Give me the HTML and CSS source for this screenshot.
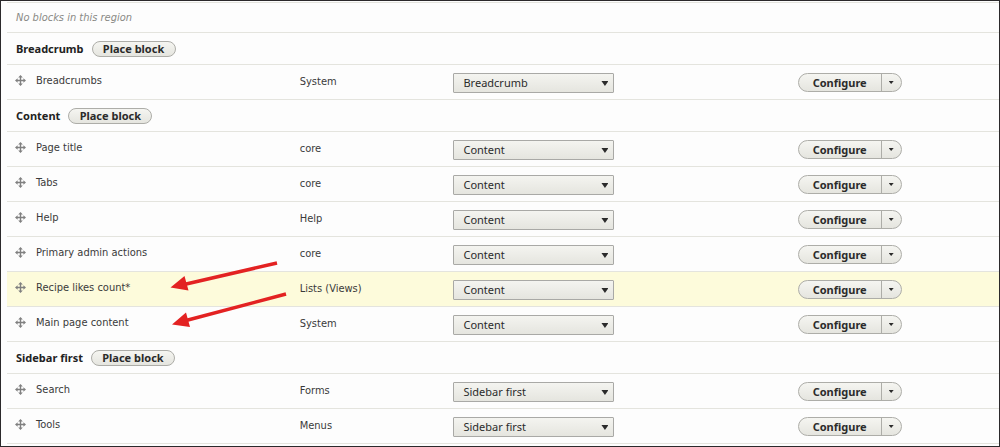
FILE: index.html
```html
<!DOCTYPE html>
<html lang="en">
<head>
<meta charset="utf-8">
<title>Block layout</title>
<link rel="stylesheet" href="styles.css">
</head>
<body>
<svg class="defs" aria-hidden="true">
  <symbol id="move" viewBox="0 0 11 11">
    <path d="M5.500 0 7.800 2.600H6.200V4.800H8.400V3.200L11 5.500 8.400 7.800V6.200H6.200V8.400H7.800L5.500 11 3.200 8.400H4.800V6.200H2.600V7.800L0 5.500 2.600 3.200V4.800H4.800V2.600H3.200Z"/>
  </symbol>
</svg>
<main class="page">
<table class="blocks">
  <colgroup><col class="col-name"><col class="col-type"><col class="col-region"><col></colgroup>
  <tbody id="rows">
  </tbody>
</table>
<svg class="arrows" width="1000" height="447" viewBox="0 0 1000 447" aria-hidden="true">
  <path class="shaft" d="M277 263 184 284.500M286 294 186 320.500"/>
  <path class="head" d="M170.500 287.500 184.500 276 188.500 290.500ZM172 324.500 186 312.500 190 327Z"/>
</svg>
</main>
<script src="blocks.js"></script>
</body>
</html>
```
FILE: blocks.js
```js
const regions = [
  { name: "Breadcrumb", blocks: [["Breadcrumbs", "System"]] },
  { name: "Content", blocks: [
    ["Page title", "core"],
    ["Tabs", "core"],
    ["Help", "Help"],
    ["Primary admin actions", "core"],
    ["Recipe likes count*", "Lists (Views)", true],
    ["Main page content", "System"]
  ] },
  { name: "Sidebar first", blocks: [["Search", "Forms"], ["Tools", "Menus"]] }
];

const blockRow = ([title, type, changed], region) => `
  <tr class="block${changed ? " changed" : ""}">
    <td class="name"><div class="handle"><a href="#" aria-label="Move ${title}"><svg class="move"><use href="#move"/></svg></a><span>${title}</span></div></td>
    <td class="type">${type}</td>
    <td><div class="select"><select aria-label="Region for ${title}">
      ${regions.map(r => `<option${r.name === region ? " selected" : ""}>${r.name}</option>`).join("")}
    </select></div></td>
    <td><div class="dropbutton"><button class="configure" type="button">Configure</button><button class="toggle" type="button" aria-label="More actions"></button></div></td>
  </tr>`;

document.getElementById("rows").innerHTML =
  `<tr class="empty"><td colspan="4">No blocks in this region</td></tr>` +
  regions.map(r => `
  <tr class="region"><th colspan="4" scope="colgroup"><div class="title"><span>${r.name}</span><button class="place" type="button">Place block</button></div></th></tr>
  ${r.blocks.map(b => blockRow(b, r.name)).join("")}`).join("");
```
FILE: styles.css
```css
* { box-sizing: border-box; }
body {
  margin: 0;
  background: #fdfdfd;
  color: #3a3a3a;
  font: 11px/16px "DejaVu Sans Condensed", "DejaVu Sans", sans-serif;
}
button, select {
  margin: 0;
  color: #2b2b2b;
  font: 11px/18px "Noto Sans", sans-serif;
  cursor: pointer;
}
.defs { position: absolute; width: 0; height: 0; }
.page {
  position: relative;
  border: 1px solid #2b292b;
  padding: 1px 0 2px 6px;
  overflow: hidden;
}
.blocks {
  width: 100%;
  table-layout: fixed;
  border-spacing: 0;
  border-top: 1px solid #e4e4de;
}
.col-name { width: 28.6%; }
.col-type { width: 15.5%; }
.col-region { width: 34.7%; }
td, th {
  padding: 0 0 0 9px;
  border-bottom: 1px solid #e4e4de;
  text-align: left;
  vertical-align: top;
}
.empty td { height: 30px; padding-top: 7px; font-style: italic; color: #8a8a86; }
.region th { height: 32px; padding-top: 8px; color: #222; font-family: "Noto Sans", sans-serif; }
.title { display: flex; gap: 8px; }
.block td { height: 35px; padding-top: 8px; }
.block .name { padding-left: 8px; }
.block .type { padding-top: 9px; }
.changed td { background: #fdfbdb; }
.handle { display: flex; gap: 10px; }
.handle a { display: flex; height: 16px; padding-top: 2px; }
.move { width: 11px; height: 11px; fill: #808080; }
.select { position: relative; width: 161px; }
.select::after {
  content: "";
  position: absolute;
  right: 6px;
  top: 8px;
  width: 7px;
  height: 5px;
  background: #2b2b2b;
  clip-path: polygon(0 0, 100% 0, 50% 100%);
  pointer-events: none;
}
.select select {
  display: block;
  appearance: none;
  width: 100%;
  height: 20px;
  padding: 0 20px 1px 9px;
  border: 1px solid #a9a9a6;
  border-radius: 1px;
  background: linear-gradient(#f4f4f0, #e5e5df);
}
.place, .dropbutton {
  border: 1px solid #adada8;
  border-radius: 10px;
  background: linear-gradient(#f5f5f1, #e5e5df);
}
.place {
  width: 84px;
  height: 16px;
  padding: 0;
  font-weight: bold;
  line-height: 14px;
}
.dropbutton { display: flex; width: 104px; height: 19px; overflow: hidden; }
.dropbutton button { border: 0; background: none; padding: 0; font-weight: bold; }
.dropbutton .configure { flex: 1; line-height: 17px; }
.dropbutton .toggle {
  display: grid;
  place-items: center;
  width: 20px;
  border-left: 1px solid #adada8;
}
.toggle::after {
  content: "";
  width: 5px;
  height: 3px;
  background: #2b2b2b;
  clip-path: polygon(0 0, 100% 0, 50% 100%);
}
.arrows { position: absolute; left: -1px; top: -1px; pointer-events: none; }
.shaft { stroke: #e32222; stroke-width: 3.5; fill: none; }
.head { fill: #e32222; }
```
